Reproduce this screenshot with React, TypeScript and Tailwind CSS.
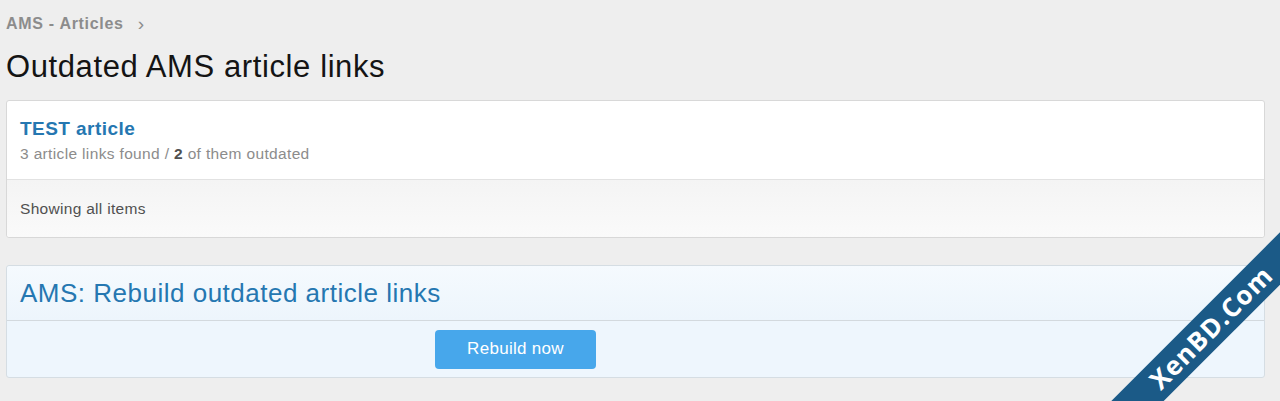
export default function App() {
  return (
    <main className="relative w-[1280px] h-[401px] overflow-hidden bg-[#eeeeee] font-['Liberation_Sans',Arial,sans-serif] px-[6px]">
      <nav className="flex items-center gap-[14px] pt-[12px] text-[16px] tracking-[0.7px] font-bold text-[#8c8c8c]">
        <span>AMS - Articles</span>
        <span className="font-normal text-[19px] leading-[16px]">&#8250;</span>
      </nav>
      <h1 className="mt-[13px] text-[31px] tracking-[0.6px] leading-[36px] text-[#141414]">Outdated AMS article links</h1>

      <section className="mt-[15px] w-[1259px] rounded-[3px] border border-[#d8d8d8] bg-white">
        <div className="h-[79px] px-[13px] pt-[17px] border-b border-[#e2e2e2]">
          <a className="block text-[19px] tracking-[0.45px] leading-[22px] font-bold text-[#2577b1]">TEST article</a>
          <p className="mt-[4px] text-[15.5px] tracking-[0.35px] leading-[20px] text-[#8c8c8c]">
            3 article links found / <b className="text-[#505050]">2</b> of them outdated
          </p>
        </div>
        <div className="h-[57px] flex items-center px-[13px] bg-gradient-to-b from-[#f4f4f4] to-[#fafafa] text-[15.5px] tracking-[0.3px] text-[#505050] rounded-b-[3px]">
          Showing all items
        </div>
      </section>

      <section className="mt-[27px] w-[1259px] rounded-[3px] border border-[#d5dde3] bg-[#eef6fd]">
        <h2 className="h-[55px] flex items-center px-[13px] text-[26px] tracking-[0.5px] text-[#2577b1] bg-gradient-to-b from-[#f5fafe] to-[#edf5fc] border-b border-[#d3d9de] rounded-t-[3px]">
          AMS: Rebuild outdated article links
        </h2>
        <div className="grid grid-cols-[420px_1fr] h-[56px] items-center">
          <div />
          <div className="pl-[8px]">
            <button className="w-[161px] h-[39px] rounded-[4px] bg-[#47a7eb] text-white text-[17px] tracking-[0.3px]">Rebuild now</button>
          </div>
        </div>
      </section>

      <div className="absolute left-[1011px] top-[309px] w-[400px] h-[37px] rotate-[-45deg] bg-[#1b5a87] flex items-center justify-center">
        <span className="font-['Open_Sans',sans-serif] font-bold text-[26px] text-white tracking-[1px]">XenBD.Com</span>
      </div>
    </main>
  );
}
